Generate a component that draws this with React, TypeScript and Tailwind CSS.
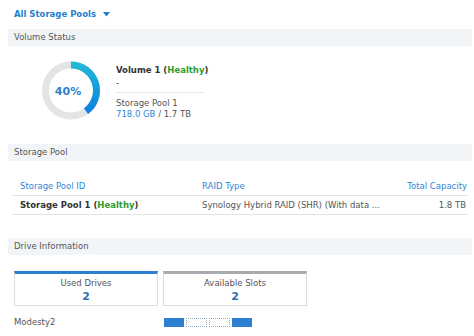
import React from "react";

const font = { fontFamily: '"DejaVu Sans", Verdana, sans-serif' };

export default function App() {
  return (
    <div className="w-[474px] h-[336px] bg-white text-[8.5px] text-[#333] overflow-hidden" style={font}>
      <div className="h-[29px] pl-[14px] flex items-center gap-[7px] text-[8.5px] font-bold text-[#1f7fd0]">
        <span>All Storage Pools</span>
        <svg width="7" height="5" viewBox="0 0 7 5">
          <path d="M0 0h7L3.5 4.5z" fill="#1f7fd0" />
        </svg>
      </div>

      <SectionBar title="Volume Status" />
      <div className="h-[98px] flex items-start pt-[15px] pl-[41px]">
        <Donut percent={40} />
        <div className="ml-[15px] w-[88px] pt-[4px] whitespace-nowrap">
          <div className="font-bold leading-[11px]">
            Volume 1 (<span className="text-[#2e9b2e]">Healthy</span>)
          </div>
          <div className="leading-[11px] mt-[2px]">-</div>
          <div className="h-px bg-[#e6e6e6] mt-[3px] mb-[5px]" />
          <div className="leading-[11px] text-[#555]">Storage Pool 1</div>
          <div className="leading-[11px] text-[#555]">
            <span className="text-[#2f86d6]">718.0 GB</span> / 1.7 TB
          </div>
        </div>
      </div>

      <SectionBar title="Storage Pool" />
      <div className="h-[77px] pt-[16px] pl-[12px] pr-[6px]">
        <div className="flex items-center h-[19px] border-b border-[#e3e3e3] text-[#2f86d6]">
          <div className="w-[190px] pl-[8px]">Storage Pool ID</div>
          <div className="flex-1">RAID Type</div>
          <div className="pr-[1px]">Total Capacity</div>
        </div>
        <div className="flex items-center h-[19px] border-b border-[#e3e3e3]">
          <div className="w-[190px] pl-[8px] font-bold">
            Storage Pool 1 (<span className="text-[#2e9b2e]">Healthy</span>)
          </div>
          <div className="flex-1 text-[#555]">Synology Hybrid RAID (SHR) (With data ...</div>
          <div className="pr-[2px] text-[#555]">1.8 TB</div>
        </div>
      </div>

      <SectionBar title="Drive Information" />
      <div className="pt-[16px] pl-[14px]">
        <div className="flex gap-[5px]">
          <StatCard label="Used Drives" value="2" top="border-t-[#2f7fd0]" />
          <StatCard label="Available Slots" value="2" top="border-t-[#a9abae]" />
        </div>
        <div className="flex items-center mt-[10px] h-[13px]">
          <div className="w-[150px] text-[#555]">Modesty2</div>
          <div className="flex gap-[2px]">
            <div className="w-[20px] h-[9px] bg-[#2f7fd0]" />
            <div className="w-[21px] h-[9px] border border-dotted border-[#9ab]" />
            <div className="w-[21px] h-[9px] border border-dotted border-[#9ab]" />
            <div className="w-[20px] h-[9px] bg-[#2f7fd0]" />
          </div>
        </div>
      </div>
    </div>
  );
}

function SectionBar({ title }: { title: string }) {
  return (
    <div className="ml-[8px] mr-[2px] h-[17px] bg-[#f2f5f8] flex items-center pl-[6px] text-[#555]">
      {title}
    </div>
  );
}

function StatCard({ label, value, top }: { label: string; value: string; top: string }) {
  return (
    <div className={`w-[144px] h-[35px] border border-[#dcdcdc] border-t-[3px] ${top} flex flex-col items-center pt-[4px]`}>
      <div className="text-[#555] leading-[11px]">{label}</div>
      <div className="text-[11px] font-bold text-[#2f6fb0] leading-[13px] mt-[1px]">{value}</div>
    </div>
  );
}

function Donut({ percent }: { percent: number }) {
  const r = 25.5;
  const cx = 30;
  const cy = 29.5;
  const a = (percent / 100) * 2 * Math.PI;
  const ex = cx + r * Math.sin(a);
  const ey = cy - r * Math.cos(a);
  const large = percent > 50 ? 1 : 0;
  return (
    <div className="relative w-[60px] h-[59px]">
      <svg width="60" height="59" viewBox="0 0 60 59">
        <defs>
          <linearGradient id="arc" gradientUnits="userSpaceOnUse" x1="30" y1="4" x2="30" y2="52">
            <stop offset="0" stopColor="#20b6d6" />
            <stop offset="1" stopColor="#0a80e0" />
          </linearGradient>
        </defs>
        <circle cx={cx} cy={cy} r={r} fill="none" stroke="#e3e4e6" strokeWidth="7" />
        <path
          d={`M${cx} ${cy - r} A${r} ${r} 0 ${large} 1 ${ex} ${ey}`}
          fill="none"
          stroke="url(#arc)"
          strokeWidth="7"
        />
      </svg>
      <div className="absolute inset-0 flex items-center justify-center pr-[6px] pt-[4px] text-[11px] font-bold text-[#2f7fd0]">
        {percent}%
      </div>
    </div>
  );
}
